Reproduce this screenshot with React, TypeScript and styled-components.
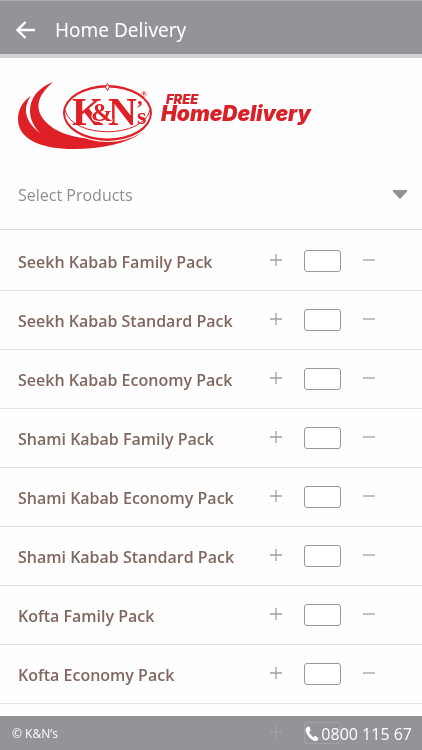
import React, { useState } from "react";
import styled, { createGlobalStyle } from "styled-components";

const GlobalStyle = createGlobalStyle`
  *, *::before, *::after { box-sizing: border-box; }
  body { margin: 0; background: #fefefe; font-family: "Open Sans", "Noto Sans", sans-serif; }
  button, input { font: inherit; }
`;

const Screen = styled.div`
  position: relative;
  display: flex;
  flex-direction: column;
  height: 100vh;
  overflow: hidden;
`;

const Header = styled.header`
  display: flex;
  align-items: center;
  gap: 19px;
  flex: none;
  height: 58px;
  padding: 4px 16px 0;
  color: #fff;
  background: #939498;
  border-top: 1px solid #acadb0;
  border-bottom: 4px solid #d2d2d2;
`;

const BackButton = styled.button`
  display: flex;
  padding: 0;
  border: 0;
  color: inherit;
  background: none;
`;

const Title = styled.h1`
  margin: 0;
  font-family: "Noto Sans", sans-serif;
  font-size: 19px;
  line-height: 28px;
  font-weight: 400;
`;

const Content = styled.main`
  flex: 1;
  min-height: 0;
  overflow-y: auto;
  scrollbar-width: none;
`;

const Brand = styled.div`
  display: flex;
  padding: 22px 16px 6px;
`;

const Picker = styled.button`
  display: flex;
  align-items: center;
  justify-content: space-between;
  width: 100%;
  height: 70px;
  padding: 0 14px 0 18px;
  border: 0;
  border-bottom: 1px solid #d9d9dc;
  color: #8e8e8e;
  background: none;
  font-size: 16px;
  line-height: 24px;
`;

const ProductList = styled.ul`
  margin: 0;
  padding: 2px 0 0;
  list-style: none;
`;

const ProductRow = styled.li`
  display: flex;
  align-items: center;
  height: 59px;
  padding: 0 46px 0 18px;
  border-bottom: 1px solid #e0e0e2;
`;

const ProductName = styled.label`
  flex: 1;
  padding-top: 2px;
  color: #806860;
  font-size: 16px;
  line-height: 24px;
  font-weight: 600;
  white-space: nowrap;
`;

const Stepper = styled.div`
  display: flex;
  align-items: center;
  gap: 21px;
`;

const StepButton = styled.button`
  display: flex;
  padding: 0;
  border: 0;
  color: #a0a0a2;
  background: none;
`;

const Quantity = styled.input`
  width: 37px;
  height: 22px;
  padding: 0 4px;
  border: 1px solid #98999d;
  border-radius: 3px;
  color: #877069;
  background: #fff;
  font-size: 12px;
  text-align: center;
`;

const Footer = styled.footer`
  position: absolute;
  inset: auto 0 0;
  display: flex;
  align-items: center;
  justify-content: space-between;
  height: 34px;
  padding: 2px 10px 0 12px;
  color: #fff;
  background: rgba(173, 174, 179, 0.85);
  backdrop-filter: invert(1);
`;

const Copyright = styled.small`
  font-size: 12px;
  line-height: 20px;
`;

const Phone = styled.a`
  display: flex;
  align-items: center;
  gap: 2px;
  color: inherit;
  font-size: 16px;
  line-height: 24px;
  text-decoration: none;
`;

const LogoText = styled.text`
  fill: #df2027;
  font-family: "Liberation Serif", serif;
  font-weight: 700;
`;

const SloganText = styled.text`
  fill: #d92129;
  font-family: Inter, sans-serif;
  font-style: italic;
  font-weight: 900;
`;

const Logo = () => (
  <svg width="300" height="74" viewBox="16 80 300 74" role="img" aria-label="K&N's Free Home Delivery">
    <path
      fill="#df2027"
      d="M31 96C23 101 18 109 18 119C18 139 40 149 74 149C101 149 126 144 143 132C134 137 125 139 112 139C80 140 60 135 48 124C32 109 38 95 53 82C37 88 30 99 30 111C30 119 34 127 40 133C25 122 22 108 31 96Z"
    />
    <ellipse cx="107.500" cy="113" rx="46" ry="29" fill="#fefefe" />
    <path
      fill="#df2027"
      fillRule="evenodd"
      d="M63 113A44.500 28 0 1 1 152 113A44.500 28 0 1 1 63 113ZM65 113A42.500 25.500 0 1 0 150 113A42.500 25.500 0 1 0 65 113Z"
    />
    <path fill="none" stroke="#df2027" d="M65 110C72 139 143 139 150 110" />
    <path d="M107.500 83.500L109.500 87L107.500 90.500L105.500 87Z" fill="#fff" stroke="#df2027" />
    <LogoText x="72" y="125" fontSize="40">K</LogoText>
    <LogoText x="108" y="125" fontSize="40">N</LogoText>
    <LogoText x="91" y="121" fontSize="26" stroke="#fefefe" strokeWidth="2" paintOrder="stroke">&amp;</LogoText>
    <LogoText x="136" y="115" fontSize="22">’</LogoText>
    <LogoText x="137" y="124" fontSize="24">s</LogoText>
    <LogoText x="141" y="97" fontSize="8">®</LogoText>
    <SloganText x="166" y="104" fontSize="13">FREE</SloganText>
    <SloganText x="161" y="121" fontSize="21">HomeDelivery</SloganText>
  </svg>
);

const products = [
  "Seekh Kabab Family Pack",
  "Seekh Kabab Standard Pack",
  "Seekh Kabab Economy Pack",
  "Shami Kabab Family Pack",
  "Shami Kabab Economy Pack",
  "Shami Kabab Standard Pack",
  "Kofta Family Pack",
  "Kofta Economy Pack",
  "",
];

const Product = ({ id, name }: { id: string; name: string }) => {
  const [amount, setAmount] = useState(0);
  return (
    <ProductRow>
      <ProductName htmlFor={id}>{name}</ProductName>
      <Stepper>
        <StepButton type="button" aria-label="Increase quantity" onClick={() => setAmount(amount + 1)}>
          <svg width="14" height="14" viewBox="0 0 14 14" fill="none" stroke="currentColor" strokeWidth="1.300">
            <path d="M1 6H13M7 0V12" />
          </svg>
        </StepButton>
        <Quantity
          id={id}
          aria-label={name ? undefined : "Quantity"}
          inputMode="numeric"
          value={amount || ""}
          onChange={(event) => setAmount(Number(event.target.value) || 0)}
        />
        <StepButton type="button" aria-label="Decrease quantity" onClick={() => setAmount(Math.max(0, amount - 1))}>
          <svg width="14" height="14" viewBox="0 0 14 14" fill="none" stroke="currentColor" strokeWidth="1.300">
            <path d="M1 6H13" />
          </svg>
        </StepButton>
      </Stepper>
    </ProductRow>
  );
};

export default function App() {
  return (
    <Screen>
      <GlobalStyle />
      <Header>
        <BackButton type="button" aria-label="Back">
          <svg width="20" height="18" viewBox="0 0 20 18" fill="none" stroke="currentColor" strokeWidth="2.400">
            <path d="M9.500 1L1.500 9L9.500 17M2 9H19" />
          </svg>
        </BackButton>
        <Title>Home Delivery</Title>
      </Header>
      <Content>
        <Brand>
          <Logo />
        </Brand>
        <Picker type="button">
          Select Products
          <svg width="16" height="9" viewBox="0 0 16 9" fill="#929295">
            <path d="M1.500 0H14.500Q16 .3 15 1.500L9 8Q8 9 7 8L1 1.500Q0 .3 1.500 0Z" />
          </svg>
        </Picker>
        <ProductList>
          {products.map((name, index) => (
            <Product key={index} id={`product-${index}`} name={name} />
          ))}
        </ProductList>
      </Content>
      <Footer>
        <Copyright>© K&amp;N’s</Copyright>
        <Phone href="tel:08001156700">
          <svg width="14" height="16" viewBox="0 0 14 16" fill="currentColor">
            <path d="M3 .5L4.500 .7L5.600 4Q5.700 4.800 4.100 6Q5.500 9.300 8.300 11.200L9.600 10.200Q10.200 9.900 10.800 10.300L13.300 12.300Q13.800 12.900 13.200 13.600Q11.500 15.900 8.900 14.700Q2.500 11.500 .7 5.200Q.1 2 3 .5Z" />
          </svg>
          0800 115 67
        </Phone>
      </Footer>
    </Screen>
  );
}
